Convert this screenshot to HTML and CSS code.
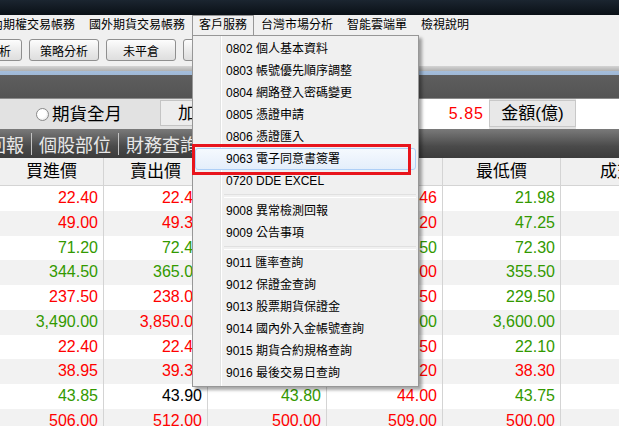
FILE: index.html
```html
<!DOCTYPE html>
<html lang="zh-Hant">
<head>
    <meta charset="UTF-8">
    <title>報價</title>
    <link rel="stylesheet" href="styles.css">
</head>
<body>
    <div class="titlebar"></div>
    <div class="menubar">
        <span class="menu_item first">內期權交易帳務</span>
        <span class="menu_item">國外期貨交易帳務</span>
        <span class="menu_item open">客戶服務</span>
        <span class="menu_item">台灣市場分析</span>
        <span class="menu_item">智能雲端單</span>
        <span class="menu_item">檢視說明</span>
    </div>
    <div class="toolbar">
        <button class="tool_btn first" type="button">技術分析</button>
        <button class="tool_btn" type="button">策略分析</button>
        <button class="tool_btn" type="button">未平倉</button>
        <button class="tool_btn" type="button">歷史</button>
    </div>
    <div class="rule"></div>
    <div class="dark_band"></div>
    <div class="quote_bar">
        <div class="radio_cell">
            <span class="radio"></span>
            <span class="radio_label">期貨全月</span>
        </div>
        <div class="plus_box">加權</div>
        <div class="value_box">5.85</div>
        <div class="label_box">金額(億)</div>
        <div class="blank_box"></div>
    </div>
    <div class="tabs">
        <span class="tab first">回報</span>
        <span class="tab_sep"></span>
        <span class="tab">個股部位</span>
        <span class="tab_sep"></span>
        <span class="tab">財務查詢</span>
    </div>
    <div class="grid">
        <div class="grid_row head">
            <div>買進價</div><div>賣出價</div><div>成交價</div><div>最高價</div><div>最低價</div><div>成交量</div>
        </div>
        <div class="grid_row">
            <div class="up">22.40</div><div class="up">22.45</div><div class="up">22.45</div><div class="up">22.46</div><div class="dn">21.98</div><div></div>
        </div>
        <div class="grid_row">
            <div class="up">49.00</div><div class="up">49.30</div><div class="up">49.20</div><div class="up">49.20</div><div class="dn">47.25</div><div></div>
        </div>
        <div class="grid_row">
            <div class="dn">71.20</div><div class="dn">72.40</div><div class="dn">72.40</div><div class="dn">72.50</div><div class="dn">72.30</div><div></div>
        </div>
        <div class="grid_row">
            <div class="dn">344.50</div><div class="dn">365.00</div><div class="dn">360.00</div><div class="up">365.00</div><div class="dn">355.50</div><div></div>
        </div>
        <div class="grid_row">
            <div class="up">237.50</div><div class="up">238.00</div><div class="up">238.00</div><div class="up">238.50</div><div class="dn">229.50</div><div></div>
        </div>
        <div class="grid_row">
            <div class="dn">3,490.00</div><div class="up">3,850.00</div><div class="dn">3,600.00</div><div class="dn">3,600.00</div><div class="dn">3,600.00</div><div></div>
        </div>
        <div class="grid_row">
            <div class="up">22.40</div><div class="up">22.45</div><div class="up">22.45</div><div class="up">22.50</div><div class="dn">22.10</div><div></div>
        </div>
        <div class="grid_row">
            <div class="up">38.95</div><div class="up">39.30</div><div class="up">39.20</div><div class="up">39.20</div><div class="up">38.30</div><div></div>
        </div>
        <div class="grid_row">
            <div class="dn">43.85</div><div class="eq">43.90</div><div class="dn">43.80</div><div class="up">44.00</div><div class="dn">43.75</div><div></div>
        </div>
        <div class="grid_row">
            <div class="up">506.00</div><div class="up">512.00</div><div class="up">500.00</div><div class="up">509.00</div><div class="up">500.00</div><div></div>
        </div>
    </div>

    <div class="dropdown">
        <div class="dd_item">0802 個人基本資料</div>
        <div class="dd_item">0803 帳號優先順序調整</div>
        <div class="dd_item">0804 網路登入密碼變更</div>
        <div class="dd_item">0805 憑證申請</div>
        <div class="dd_item">0806 憑證匯入</div>
        <div class="dd_item hover">9063 電子同意書簽署</div>
        <div class="dd_item">0720 DDE EXCEL</div>
        <div class="dd_sep"></div>
        <div class="dd_item">9008 異常檢測回報</div>
        <div class="dd_item">9009 公告事項</div>
        <div class="dd_sep"></div>
        <div class="dd_item">9011 匯率查詢</div>
        <div class="dd_item">9012 保證金查詢</div>
        <div class="dd_item">9013 股票期貨保證金</div>
        <div class="dd_item">9014 國內外入金帳號查詢</div>
        <div class="dd_item">9015 期貨合約規格查詢</div>
        <div class="dd_item">9016 最後交易日查詢</div>
    </div>
    <div class="mark"></div>
</body>
</html>
```

FILE: styles.css
```css
* {
    box-sizing: border-box;
}
html, body {
    margin: 0;
}
body {
    position: relative;
    width: 619px;
    height: 426px;
    overflow: hidden;
    background-color: #fff;
    font-family: "Liberation Sans", "Noto Sans CJK TC", sans-serif;
    color: #000;
}

.titlebar {
    height: 15px;
    background: linear-gradient(#1b2530, #0a1016);
}

.menubar {
    display: flex;
    height: 21px;
    background-color: #f0f0f0;
    font-size: 12px;
    line-height: 20px;
    white-space: nowrap;
}
.menu_item {
    padding: 0 7px;
}
.menu_item.first {
    margin-left: -16px;
}
.menu_item.open {
    border: 1px solid #979797;
    border-bottom: 0;
    padding: 0 6px;
    line-height: 19px;
}

.toolbar {
    display: flex;
    gap: 7px;
    height: 30px;
    padding-top: 3px;
    background-color: #f0f0f0;
}
.tool_btn {
    flex: none;
    width: 70px;
    height: 22px;
    padding: 0;
    border: 1px solid #8f8f8f;
    border-radius: 3px;
    background: linear-gradient(#fdfdfd, #ececec 50%, #dedede);
    font-family: "Liberation Sans", "Noto Sans CJK TC", sans-serif;
    font-size: 12px;
    color: #000;
}
.tool_btn.first {
    margin-left: -48px;
}

.rule {
    height: 9px;
    background: linear-gradient(#d4d4d4, #b0b0b0 5px, #a4bddb 5px, #9fb8d6);
}
.dark_band {
    height: 24px;
    background: linear-gradient(#5e5e5e, #545454);
    border-bottom: 1px solid #8a8a8a;
}

.quote_bar {
    display: grid;
    grid-template-columns: 160px 240px 89px 87px 1fr;
    height: 30px;
    background-color: #e2e2e2;
}
.radio_cell {
    display: flex;
    align-items: center;
    padding-left: 36px;
}
.radio {
    width: 13px;
    height: 13px;
    border: 1px solid #8a8a8a;
    border-radius: 50%;
    background: radial-gradient(circle at 40% 40%, #fff 45%, #d8d8d8);
}
.radio_label {
    margin-left: 3px;
    font-size: 17.5px;
    line-height: 30px;
}
.plus_box {
    margin: 1px 0 3px;
    padding-left: 17px;
    border: 1px solid #c4c4c4;
    background-color: #ededed;
    font-size: 17.5px;
    line-height: 24px;
}
.value_box {
    background-color: #fff;
    padding-right: 5px;
    text-align: right;
    color: #ff0000;
    font-size: 16px;
    letter-spacing: 1px;
    line-height: 30px;
}
.label_box {
    margin: 1px 0 2px;
    border: 1px solid #c8c8c8;
    background-color: #e8e8e8;
    text-align: center;
    font-size: 17px;
    line-height: 25px;
}
.blank_box {
    background-color: #fff;
}

.tabs {
    display: flex;
    align-items: center;
    height: 29px;
    background: linear-gradient(#7a7a7a, #4a4a4a 60%, #3c3c3c);
    color: #e8e8e8;
    font-size: 18px;
    white-space: nowrap;
}
.tab {
    padding: 0 7px;
}
.tab.first {
    margin-left: -19px;
}
.tab_sep {
    width: 1px;
    height: 22px;
    background-color: #c4c4c4;
}

.grid_row {
    display: grid;
    grid-template-columns: 104px 104px 119px 116px 118px 130px;
    height: 24.75px;
    font-size: 16px;
    line-height: 24px;
}
.grid_row:nth-child(odd) {
    background-color: #f2f2f2;
}
.grid_row > div {
    padding-right: 5px;
    border-right: 1px solid #d4d4d4;
    text-align: right;
    white-space: nowrap;
}
.grid_row.head {
    height: 28px;
    background-color: #f0f0f0;
    border-bottom: 1px solid #d4d4d4;
    font-size: 17px;
    line-height: 27px;
}
.grid_row.head > div {
    padding-right: 0;
    text-align: center;
}
.up {
    color: #ff0000;
}
.dn {
    color: #339900;
}
.eq {
    color: #000;
}

.dropdown {
    position: absolute;
    left: 192px;
    top: 35px;
    width: 227px;
    padding: 2px;
    border: 1px solid #979797;
    background: linear-gradient(90deg, #f0f0f0 27px, #e2e3e3 27px, #e2e3e3 28px, #fff 28px, #fff 29px, #f0f0f0 29px);
    box-shadow: 3px 3px 3px rgba(0, 0, 0, 0.35);
    font-size: 12px;
    white-space: nowrap;
}
.dd_item {
    height: 22px;
    padding-left: 31px;
    line-height: 22px;
}
.dd_item.hover {
    padding-left: 30px;
    border: 1px solid #aecff7;
    border-radius: 3px;
    background: linear-gradient(#f5f9fe, #e4eefb);
    line-height: 20px;
}
.dd_sep {
    display: flex;
    align-items: center;
    height: 8px;
    padding-left: 29px;
}
.dd_sep::before {
    content: "";
    flex: 1;
    height: 2px;
    border-top: 1px solid #e0e0e0;
    border-bottom: 1px solid #fff;
}

.mark {
    position: absolute;
    left: 192px;
    top: 144px;
    width: 219px;
    height: 31px;
    border: 3px solid #e8141c;
}
```
